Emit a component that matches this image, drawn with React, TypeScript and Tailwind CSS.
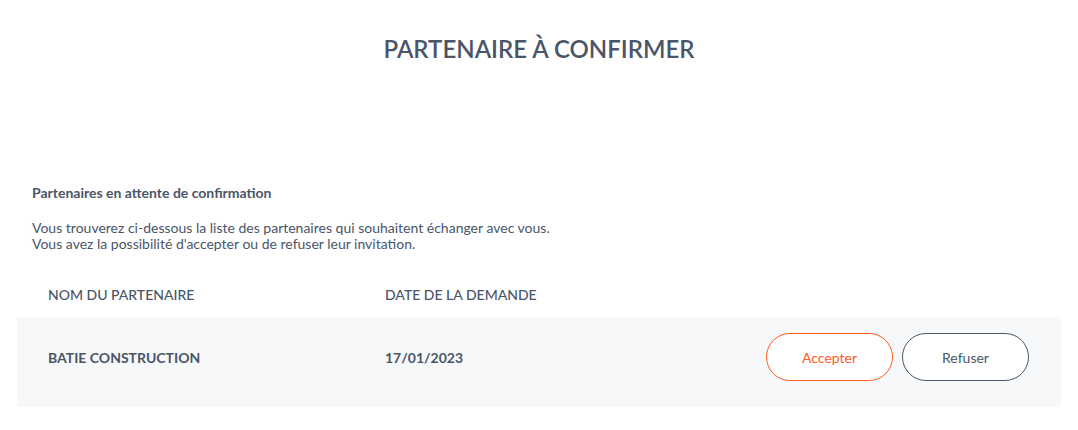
export default function App() {
  return (
    <div className="min-h-[430px] w-full bg-white text-[#4a5568]" style={{ fontFamily: 'Lato, "Noto Sans", sans-serif' }}>
      <h1 className="pt-[34px] text-center text-[24px] font-semibold leading-[30px] text-[#4a5568]">
        PARTENAIRE À CONFIRMER
      </h1>

      <div className="mx-[17px] mt-[121px]">
        <div className="px-[15px]">
          <p className="text-[14px] font-bold leading-[16px]">Partenaires en attente de confirmation</p>
          <p className="mt-[19px] text-[14px] leading-[16px]">
            Vous trouverez ci-dessous la liste des partenaires qui souhaitent échanger avec vous.
            <br />
            Vous avez la possibilité d'accepter ou de refuser leur invitation.
          </p>
        </div>

        <div className="mt-[19px] flex h-[46px] items-center px-[31px] text-[14px] font-medium uppercase">
          <span className="w-[337px]">Nom du partenaire</span>
          <span>Date de la demande</span>
        </div>

        <div className="flex h-[90px] items-center bg-[#f7f8fa] pb-[10px] pl-[31px] pr-[32px] text-[14px] font-bold">
          <span className="w-[337px]">BATIE CONSTRUCTION</span>
          <span>17/01/2023</span>
          <div className="ml-auto flex gap-[9px]">
            <button className="h-[48px] w-[127px] rounded-full border border-[#ff5a1f] bg-white text-[14px] font-normal text-[#ff5a1f]">
              Accepter
            </button>
            <button className="h-[48px] w-[127px] rounded-full border border-[#4a5568] bg-white text-[14px] font-normal text-[#4a5568]">
              Refuser
            </button>
          </div>
        </div>
      </div>
    </div>
  );
}
